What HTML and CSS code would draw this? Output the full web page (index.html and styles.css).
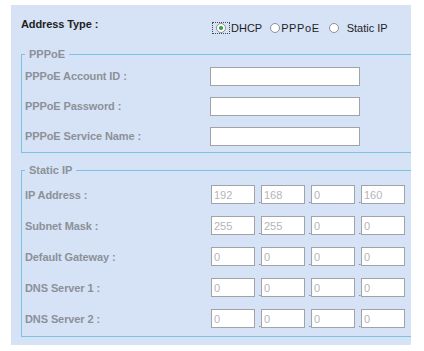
FILE: index.html
```html
<!DOCTYPE html>
<html lang="en">
<head>
  <meta charset="UTF-8">
  <title>WAN Settings</title>
  <link rel="stylesheet" href="styles.css">
</head>
<body>
  <div class="panel">
    <div class="type-row">
      <span class="type-label">Address Type :</span>
      <div class="radios">
        <span class="focus"><input type="radio" name="type" checked></span>
        <span class="opt opt-dhcp">DHCP</span>
        <input type="radio" name="type" class="r-pppoe">
        <span class="opt opt-pppoe">PPPoE</span>
        <input type="radio" name="type" class="r-static">
        <span class="opt opt-static">Static IP</span>
      </div>
    </div>

    <fieldset class="group">
      <legend>PPPoE</legend>
      <div class="row">
        <label>PPPoE Account ID :</label>
        <input type="text" class="text">
      </div>
      <div class="row">
        <label>PPPoE Password :</label>
        <input type="password" class="text">
      </div>
      <div class="row">
        <label>PPPoE Service Name :</label>
        <input type="text" class="text">
      </div>
    </fieldset>

    <fieldset class="group group-static">
      <legend>Static IP</legend>
      <div class="row">
        <label>IP Address :</label>
        <div class="ip">
          <input type="text" value="192"><span class="dot">.</span><input type="text" value="168"><span class="dot">.</span><input type="text" value="0"><span class="dot">.</span><input type="text" value="160">
        </div>
      </div>
      <div class="row">
        <label>Subnet Mask :</label>
        <div class="ip">
          <input type="text" value="255"><span class="dot">.</span><input type="text" value="255"><span class="dot">.</span><input type="text" value="0"><span class="dot">.</span><input type="text" value="0">
        </div>
      </div>
      <div class="row">
        <label>Default Gateway :</label>
        <div class="ip">
          <input type="text" value="0"><span class="dot">.</span><input type="text" value="0"><span class="dot">.</span><input type="text" value="0"><span class="dot">.</span><input type="text" value="0">
        </div>
      </div>
      <div class="row">
        <label>DNS Server 1 :</label>
        <div class="ip">
          <input type="text" value="0"><span class="dot">.</span><input type="text" value="0"><span class="dot">.</span><input type="text" value="0"><span class="dot">.</span><input type="text" value="0">
        </div>
      </div>
      <div class="row">
        <label>DNS Server 2 :</label>
        <div class="ip">
          <input type="text" value="0"><span class="dot">.</span><input type="text" value="0"><span class="dot">.</span><input type="text" value="0"><span class="dot">.</span><input type="text" value="0">
        </div>
      </div>
    </fieldset>
  </div>
</body>
</html>
```

FILE: styles.css
```css
body {
  margin: 0;
  background: #ffffff;
  font-family: 'Liberation Sans', Arial, sans-serif;
  font-size: 11px;
}

.panel {
  margin: 5px 0 0 11px;
  width: 400px;
  height: 340px;
  box-sizing: border-box;
  padding: 9px 0 0 10px;
  background: #d6e2f6;
  overflow: hidden;
}

.type-row {
  display: flex;
  height: 20px;
}

.type-label {
  width: 191px;
  line-height: 20px;
  font-weight: bold;
  color: #1e1e1e;
  letter-spacing: -0.1px;
}

.radios {
  display: flex;
  align-items: flex-start;
  margin-top: 8px;
}

.radios input {
  appearance: none;
  -webkit-appearance: none;
  width: 10px;
  height: 10px;
  margin: 1px 0 0 0;
  border: 1px solid #8d9196;
  border-radius: 50%;
  background: #ffffff;
  box-sizing: border-box;
}

.radios input:checked {
  background: radial-gradient(circle, #3fa54a 0, #3fa54a 1.6px, #ffffff 2.4px);
}

.focus {
  display: flex;
  height: 10px;
  padding: 0 3px;
  border: 1px dotted #4a4a4a;
}

.focus input {
  margin: 0;
}

.opt {
  line-height: 12px;
  color: #1e1e1e;
}

.opt-dhcp {
  margin: 0 8px 0 1px;
}

.opt-pppoe {
  margin: 0 9px 0 1px;
  letter-spacing: 0.6px;
}

.opt-static {
  margin-left: 8px;
}

.group {
  width: 420px;
  margin: 14px 0 0 0;
  padding: 0 0 1px 3px;
  border: 1px solid #7cc3e1;
  border-right: none;
  box-sizing: border-box;
}

.group legend {
  padding: 0 4px;
  line-height: 13px;
  font-weight: bold;
  color: #8c9198;
}

.group-static {
  margin-top: 11px;
  padding-top: 2px;
  padding-bottom: 2px;
}

.row {
  display: flex;
  align-items: center;
  height: 30px;
}

.group-static .row {
  height: 31px;
}

.row label {
  width: 185px;
  font-weight: bold;
  color: #8c9198;
  letter-spacing: -0.1px;
}

.text {
  width: 150px;
  height: 19px;
  margin: 0;
  padding: 0 2px;
  border: 1px solid #a0a4a9;
  box-sizing: border-box;
  background: #ffffff;
}

.ip {
  display: flex;
  margin-left: 1px;
}

.ip input {
  width: 44px;
  height: 19px;
  margin: 0;
  padding: 0 2px;
  border: 1px solid #a0a4a9;
  box-sizing: border-box;
  background: #ffffff;
  font-family: 'Liberation Sans', Arial, sans-serif;
  font-size: 11px;
  color: #b3b5b8;
}

.dot {
  display: flex;
  align-items: flex-end;
  justify-content: flex-end;
  width: 6px;
  height: 19px;
  font-size: 9px;
  line-height: 8px;
  color: #555;
}
```
